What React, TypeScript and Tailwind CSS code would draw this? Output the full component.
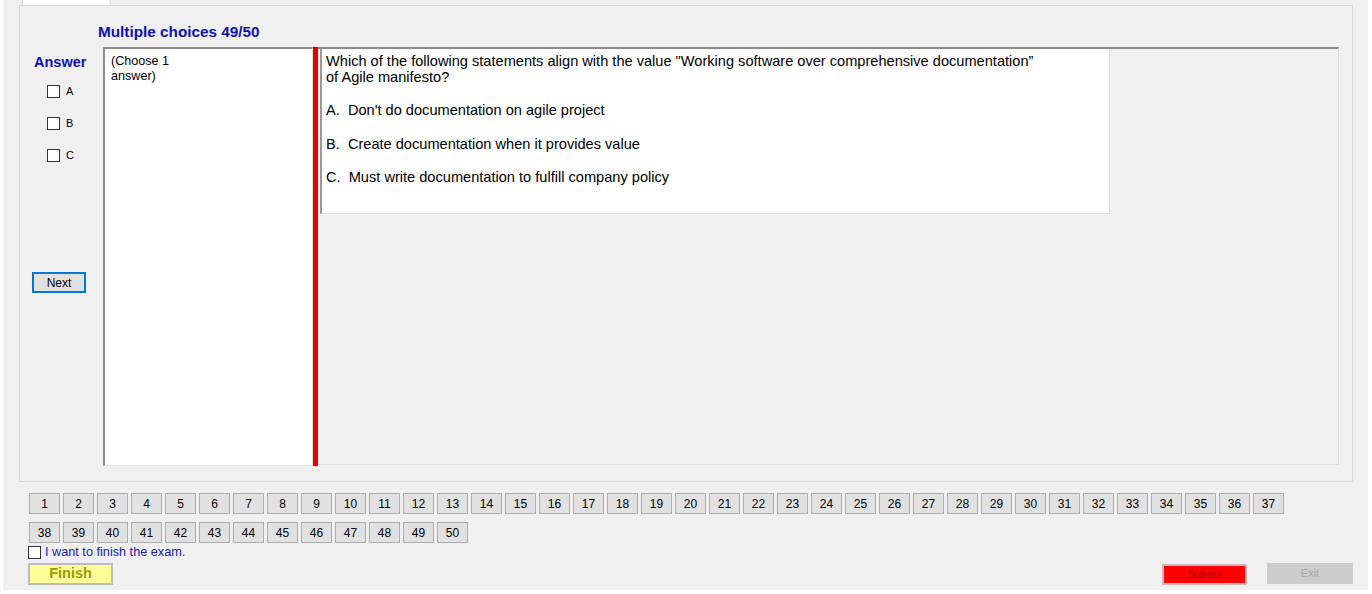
import React from "react";

const font = { fontFamily: '"Liberation Sans", Arial, sans-serif' };

function Check({ label }: { label?: string }) {
  return (
    <div className="flex items-center h-[13px]">
      <div className="w-[13px] h-[13px] border border-[#333333] bg-white shrink-0" />
      {label && <span className="ml-[6px] text-[11px] leading-[13px] text-black">{label}</span>}
    </div>
  );
}

function NumBtn({ n }: { n: number }) {
  return (
    <div className="w-[31px] h-[21px] border border-[#adadad] bg-[#e1e1e1] flex items-center justify-center text-[12px] text-black shrink-0">
      {n}
    </div>
  );
}

export default function App() {
  const row1 = Array.from({ length: 37 }, (_, i) => i + 1);
  const row2 = Array.from({ length: 13 }, (_, i) => i + 38);
  return (
    <div className="w-[1372px] h-[594px] bg-white overflow-hidden" style={font}>
      <div className="ml-[3px] w-[1365px] h-[590px] bg-[#f0f0f0] flex flex-col">
        {/* tab strip */}
        <div className="h-[5px] flex">
          <div className="ml-[19px] w-[89px] h-[5px] bg-white border-x border-[#d9d9d9]" />
        </div>
        {/* tab page */}
        <div className="ml-[16px] w-[1334px] h-[477px] border border-[#d9d9d9] flex flex-col">
          <div className="h-[41px] pl-[78px] pt-[17px]">
            <div className="text-[15.3px] leading-[18px] font-bold text-[#1010b0]">Multiple choices 49/50</div>
          </div>
          <div className="flex h-[419px]">
            {/* left column */}
            <div className="w-[83px] flex flex-col pt-[7px]">
              <div className="ml-[14px] text-[14.5px] leading-[16px] font-bold text-[#1010b0]">Answer</div>
              <div className="ml-[27px] mt-[15px]">
                <Check label="A" />
              </div>
              <div className="ml-[27px] mt-[19px]">
                <Check label="B" />
              </div>
              <div className="ml-[27px] mt-[19px]">
                <Check label="C" />
              </div>
              <div className="ml-[12px] mt-[110px] w-[54px] h-[21px] border-2 border-[#0078d7] bg-[#e1e1e1] flex items-center justify-center text-[12px] text-black">
                Next
              </div>
            </div>
            {/* choose box */}
            <div className="w-[210px] h-full bg-white border-l-2 border-t-2 border-l-[#8c8c8c] border-t-[#8c8c8c] border-r border-b border-r-[#e3e3e3] border-b-[#e3e3e3] pl-[6px] pt-[5px]">
              <div className="text-[12.6px] leading-[15px] text-black">
                (Choose 1
                <br />
                answer)
              </div>
            </div>
            {/* red bar */}
            <div className="w-[5px] h-full bg-[#e60000]" />
            {/* question panel */}
            <div className="w-[1021px] h-[418px] border-t-2 border-t-[#8a8a8a] border-r border-b border-r-[#dcdcdc] border-b-[#dcdcdc] pl-[2px]">
              <div className="w-[790px] h-[165px] bg-white border-l-2 border-l-[#9a9a9a] border-r border-b border-r-[#dcdcdc] border-b-[#dcdcdc] pl-[4px] pt-[4px] text-[14.6px] leading-[16px] text-black">
                <div>Which of the following statements align with the value "Working software over comprehensive documentation”</div>
                <div>of Agile manifesto?</div>
                <div className="mt-[17px] whitespace-pre">A.  Don't do documentation on agile project</div>
                <div className="mt-[18px] whitespace-pre">B.  Create documentation when it provides value</div>
                <div className="mt-[17px] whitespace-pre">C.  Must write documentation to fulfill company policy</div>
              </div>
            </div>
          </div>
        </div>
        {/* number buttons */}
        <div className="ml-[26px] mt-[11px] flex gap-[3px]">
          {row1.map((n) => (
            <NumBtn key={n} n={n} />
          ))}
        </div>
        <div className="ml-[26px] mt-[8px] flex gap-[3px]">
          {row2.map((n) => (
            <NumBtn key={n} n={n} />
          ))}
        </div>
        <div className="ml-[25px] mt-[3px] flex items-center h-[13px]">
          <div className="w-[13px] h-[13px] border border-[#333333] bg-white shrink-0" />
          <span className="ml-[4px] text-[12.7px] leading-[13px] text-[#1c1ca8]">I want to finish the exam.</span>
        </div>
        <div className="mt-[4px] flex items-start pr-[15px]">
          <div className="ml-[25px] w-[85px] h-[22px] border-2 border-[#bdbdbd] bg-[#ffff99] flex items-center justify-center text-[14.5px] font-bold text-[#999900]">
            Finish
          </div>
          <div className="ml-auto mt-[1px] w-[85px] h-[21px] border-2 border-[#d2b6b6] bg-[#ff0000] flex items-center justify-center text-[11px] text-[#b00000]">
            Submit
          </div>
          <div className="ml-[20px] w-[86px] h-[21px] bg-[#cccccc] flex items-center justify-center text-[11px] text-[#a8a8a8]">
            Exit
          </div>
        </div>
      </div>
    </div>
  );
}
